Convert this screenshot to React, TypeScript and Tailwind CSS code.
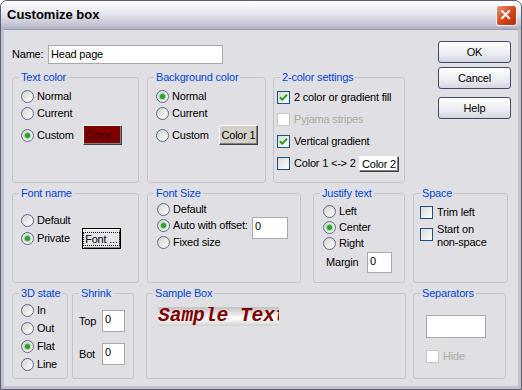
import React from "react";

function Radio({ checked, label }: { checked?: boolean; label: string }) {
  return (
    <span className="flex items-center gap-[3px]">
      <span className="flex h-[13px] w-[13px] shrink-0 items-center justify-center rounded-full border border-[#5a6a84] bg-[linear-gradient(135deg,#d4d4ce,#ffffff)]">
        {checked ? (
          <span className="h-[5px] w-[5px] rounded-full bg-[#2f9e2f] shadow-[0_0_0_1px_#9bd89b]" />
        ) : null}
      </span>
      <span>{label}</span>
    </span>
  );
}

function Check({
  checked,
  disabled,
  label,
}: {
  checked?: boolean;
  disabled?: boolean;
  label: string;
}) {
  return (
    <span className="flex items-center gap-[4px]">
      <span
        className={
          disabled
            ? "h-[13px] w-[13px] shrink-0 border border-[#c9c7c0] bg-white"
            : "flex h-[13px] w-[13px] shrink-0 items-center justify-center border border-[#1c5180] bg-[linear-gradient(135deg,#d9d9d4,#ffffff)]"
        }
      >
        {checked ? (
          <svg viewBox="0 0 11 11" className="h-[11px] w-[11px]">
            <path d="M2 5.2 L4.3 7.6 L9 2.8" stroke="#21a121" strokeWidth="2" fill="none" />
          </svg>
        ) : null}
      </span>
      <span className={disabled ? "text-[#aca8a0]" : ""}>{label}</span>
    </span>
  );
}

// legend sits in the padding box, so inner spacing goes on a wrapper
function Group({
  title,
  className,
  inner,
  children,
}: {
  title: string;
  className: string;
  inner: string;
  children?: React.ReactNode;
}) {
  return (
    <fieldset className={`shrink-0 rounded-[3px] border border-[#c3c3c9] ${className}`}>
      <legend className="ml-[6px] whitespace-nowrap px-[2px] leading-[13px] text-[#0046d5]">
        {title}
      </legend>
      <div className={inner}>{children}</div>
    </fieldset>
  );
}

function Field({ value, className }: { value?: string; className: string }) {
  return (
    <div
      className={`shrink-0 border border-[#a5a9b2] bg-white pl-[2px] pt-[2px] leading-[13px] ${className}`}
    >
      {value}
    </div>
  );
}

function ClassicBtn({ children, className }: { children: React.ReactNode; className: string }) {
  return (
    <div
      className={`flex shrink-0 items-center justify-center border border-t-white border-l-white border-r-[#404040] border-b-[#404040] shadow-[inset_-1px_-1px_0_#808080] ${className}`}
    >
      {children}
    </div>
  );
}

function XpButton({ children, className = "" }: { children: string; className?: string }) {
  return (
    <div
      className={`flex h-[22px] w-[73px] items-center justify-center rounded-[3px] border border-[#3f4c6b] bg-[linear-gradient(to_bottom,#ffffff,#eeeef2_55%,#d5d5df)] ${className}`}
    >
      {children}
    </div>
  );
}

export default function App() {
  return (
    <div className="h-[390px] w-[522px] bg-white">
      <div className="flex h-[390px] w-[522px] flex-col overflow-hidden rounded-t-[7px] border border-[#5c5c74] bg-[#c2c2d0] font-['Liberation_Sans',Arial,sans-serif] text-[11px] tracking-[-0.2px] text-black">
        {/* title bar */}
        <div className="flex h-[28px] shrink-0 items-center justify-between bg-[linear-gradient(to_bottom,#ffffff,#e6e6ee_45%,#c4c4d4_85%,#b0b0c2)] pl-[6px] pr-[4px]">
          <span className="text-[13px] font-bold tracking-normal">Customize box</span>
          <div className="flex h-[21px] w-[21px] items-center justify-center rounded-[3px] border border-white bg-[linear-gradient(135deg,#eb9275,#d5491f_50%,#b52d0e)]">
            <svg viewBox="0 0 21 21" className="h-[19px] w-[19px]">
              <path d="M5.5 5.5 L13.5 13.5 M13.5 5.5 L5.5 13.5" stroke="white" strokeWidth="2.2" strokeLinecap="round" />
            </svg>
          </div>
        </div>

        {/* client area */}
        <div className="mx-[3px] mb-[3px] flex-1 border-t border-[#9a9aae] bg-[#e0dfe3] pl-[8px]">
          <div className="flex">
            <div className="w-[393px]">
              <div className="mt-[15px] flex h-[19px] items-center">
                <span className="w-[36px]">Name:</span>
                <Field value="Head page" className="h-[19px] w-[175px]" />
              </div>

              <div className="mt-[7px] flex">
                <Group title="Text color" className="h-[112px] w-[127px]" inner="pl-[8px] pt-[4px]">
                  <div className="flex h-[17px] items-center">
                    <Radio label="Normal" />
                  </div>
                  <div className="flex h-[17px] items-center">
                    <Radio label="Current" />
                  </div>
                  <div className="mt-[3px] flex h-[20px] items-center">
                    <div className="w-[62px]">
                      <Radio checked label="Custom" />
                    </div>
                    <ClassicBtn className="h-[20px] w-[39px] bg-[#800000] text-[#3a0000]">Color...</ClassicBtn>
                  </div>
                </Group>

                <Group title="Background color" className="ml-[8px] h-[112px] w-[119px]" inner="pl-[8px] pt-[4px]">
                  <div className="flex h-[17px] items-center">
                    <Radio checked label="Normal" />
                  </div>
                  <div className="flex h-[17px] items-center">
                    <Radio label="Current" />
                  </div>
                  <div className="mt-[3px] flex h-[20px] items-center">
                    <div className="w-[63px]">
                      <Radio label="Custom" />
                    </div>
                    <ClassicBtn className="h-[20px] w-[39px] bg-[#d4d0c8]">Color 1</ClassicBtn>
                  </div>
                </Group>

                <Group title="2-color settings" className="ml-[7px] h-[112px] w-[132px]" inner="pl-[3px] pt-[2px]">
                  <div className="flex h-[22px] items-center">
                    <Check checked label="2 color or gradient fill" />
                  </div>
                  <div className="flex h-[22px] items-center">
                    <Check disabled label="Pyjama stripes" />
                  </div>
                  <div className="flex h-[22px] items-center">
                    <Check checked label="Vertical gradient" />
                  </div>
                  <div className="flex h-[22px] items-center">
                    <div className="w-[82px]">
                      <Check label="Color 1 <-> 2" />
                    </div>
                    <ClassicBtn className="mt-[2px] h-[16px] w-[40px] bg-white">Color 2</ClassicBtn>
                  </div>
                </Group>
              </div>
            </div>

            <div className="ml-[33px] mt-[11px] flex flex-col">
              <XpButton>OK</XpButton>
              <XpButton className="mt-[4px]">Cancel</XpButton>
              <XpButton className="mt-[8px]">Help</XpButton>
            </div>
          </div>

          {/* row 2 */}
          <div className="mt-[4px] flex">
            <Group title="Font name" className="h-[96px] w-[127px]" inner="pl-[8px] pt-[13px]">
              <div className="flex h-[15px] items-center">
                <Radio label="Default" />
              </div>
              <div className="flex h-[21px] items-center">
                <div className="w-[61px]">
                  <Radio checked label="Private" />
                </div>
                <div className="flex h-[21px] w-[39px] items-center justify-center border border-black bg-[#e6e6ea] shadow-[inset_1px_1px_0_#ffffff,inset_-1px_-1px_0_#808080]">
                  <span className="border border-dotted border-black px-[1px] leading-[12px]">Font ...</span>
                </div>
              </div>
            </Group>

            <Group title="Font Size" className="ml-[8px] h-[96px] w-[154px]" inner="pl-[9px] pt-[1px]">
              <div className="flex h-[16px] items-center">
                <Radio label="Default" />
              </div>
              <div className="flex h-[17px] items-center">
                <div className="w-[95px]">
                  <Radio checked label="Auto with offset:" />
                </div>
                <Field value="0" className="mt-[4px] h-[22px] w-[36px]" />
              </div>
              <div className="flex h-[17px] items-center">
                <Radio label="Fixed size" />
              </div>
            </Group>

            <Group title="Justify text" className="ml-[12px] h-[96px] w-[92px]" inner="pl-[9px] pt-[3px]">
              <div className="flex h-[16px] items-center">
                <Radio label="Left" />
              </div>
              <div className="flex h-[16px] items-center">
                <Radio checked label="Center" />
              </div>
              <div className="flex h-[16px] items-center">
                <Radio label="Right" />
              </div>
              <div className="mt-[1px] flex h-[21px] items-center">
                <span className="ml-[3px] w-[41px]">Margin</span>
                <Field value="0" className="h-[21px] w-[25px]" />
              </div>
            </Group>

            <Group title="Space" className="ml-[8px] h-[96px] w-[95px]" inner="pl-[6px] pt-[4px]">
              <div className="flex h-[16px] items-center">
                <Check label="Trim left" />
              </div>
              <div className="mt-[3px] flex items-start gap-[4px]">
                <span className="mt-[5px] h-[13px] w-[13px] shrink-0 border border-[#1c5180] bg-[linear-gradient(135deg,#d9d9d4,#ffffff)]" />
                <span className="leading-[13px]">
                  Start on
                  <br />
                  non-space
                </span>
              </div>
            </Group>
          </div>

          {/* row 3 */}
          <div className="mt-[4px] flex">
            <Group title="3D state" className="h-[92px] w-[56px]" inner="pl-[8px] pt-[1px]">
              <div className="flex h-[18px] items-center">
                <Radio label="In" />
              </div>
              <div className="flex h-[18px] items-center">
                <Radio label="Out" />
              </div>
              <div className="flex h-[18px] items-center">
                <Radio checked label="Flat" />
              </div>
              <div className="flex h-[18px] items-center">
                <Radio label="Line" />
              </div>
            </Group>

            <Group title="Shrink" className="ml-[4px] h-[92px] w-[62px]" inner="pl-[6px] pt-[10px]">
              <div className="flex h-[22px] items-center">
                <span className="w-[23px]">Top</span>
                <Field value="0" className="h-[22px] w-[23px]" />
              </div>
              <div className="mt-[11px] flex h-[22px] items-center">
                <span className="w-[23px]">Bot</span>
                <Field value="0" className="h-[22px] w-[23px]" />
              </div>
            </Group>

            <Group title="Sample Box" className="ml-[12px] h-[92px] w-[260px]" inner="pl-[11px] pt-[7px]">
              <div className="h-[19px] w-[121px] overflow-hidden whitespace-nowrap bg-[linear-gradient(to_bottom,#c2c2c2,#ffffff_60%,#d2d2d2)] font-['Liberation_Mono',monospace] text-[19.5px] font-bold italic leading-[19px] tracking-normal text-[#800000]">
                Sample Text
              </div>
            </Group>

            <Group title="Separators" className="ml-[7px] h-[92px] w-[93px]" inner="pl-[12px] pt-[15px]">
              <Field className="h-[23px] w-[60px]" />
              <div className="mt-[10px]">
                <Check disabled label="Hide" />
              </div>
            </Group>
          </div>
        </div>
      </div>
    </div>
  );
}
